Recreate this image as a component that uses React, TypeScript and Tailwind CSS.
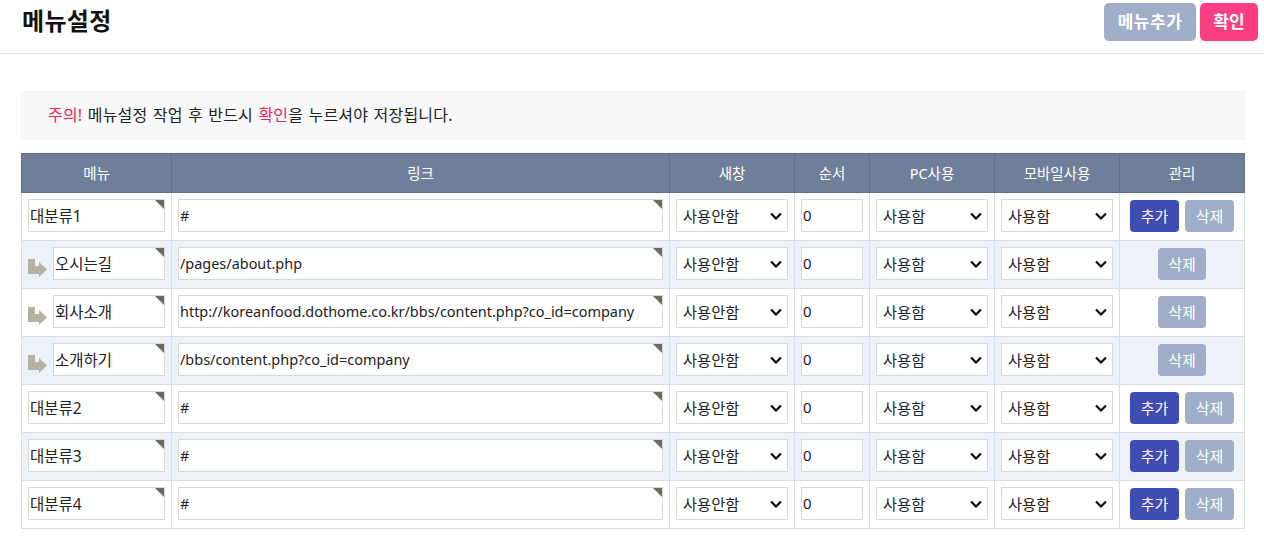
import React from 'react'

const font = { fontFamily: '"Noto Sans", "Noto Sans CJK KR", sans-serif' }

type Row = { name: string; link: string; sub?: boolean }

const rows: Row[] = [
  { name: '대분류1', link: '#' },
  { name: '오시는길', link: '/pages/about.php', sub: true },
  { name: '회사소개', link: 'http://koreanfood.dothome.co.kr/bbs/content.php?co_id=company', sub: true },
  { name: '소개하기', link: '/bbs/content.php?co_id=company', sub: true },
  { name: '대분류2', link: '#' },
  { name: '대분류3', link: '#' },
  { name: '대분류4', link: '#' },
]

const headers = ['메뉴', '링크', '새창', '순서', 'PC사용', '모바일사용', '관리']

function TextBox({ value, korean }: { value: string; korean?: boolean }) {
  return (
    <div className="relative min-w-0 flex-1">
      <input
        readOnly
        value={value}
        className={
          korean
            ? 'block h-[33px] w-full border border-[#d8d8d8] bg-white pl-[1px] text-[15.5px] text-[#222] outline-none'
            : 'block h-[33px] w-full border border-[#d8d8d8] bg-white pl-[1px] pb-[1px] text-[14.45px] text-[#222] outline-none'
        }
      />
      <span className="absolute right-[1px] top-[1px] h-0 w-0 border-l-[9px] border-t-[9px] border-l-transparent border-t-[#6b6b62]" />
    </div>
  )
}

function Choice({ value, options }: { value: string; options: string[] }) {
  return (
    <div className="relative">
      <select
        defaultValue={value}
        className="block h-[33px] w-full appearance-none border border-[#d8d8d8] bg-white pl-[6px] pt-[2px] text-[15.3px] text-[#222] outline-none"
      >
        {options.map((o) => (
          <option key={o}>{o}</option>
        ))}
      </select>
      <svg
        width="12"
        height="8"
        viewBox="0 0 12 8"
        fill="none"
        stroke="#111"
        strokeWidth="2.2"
        className="pointer-events-none absolute right-[6px] top-[13px]"
      >
        <path d="M1 1.5l5 5 5-5" />
      </svg>
    </div>
  )
}

function SubArrow() {
  return (
    <svg width="19" height="19" viewBox="0 0 19 19" className="mt-[12px] shrink-0" fill="#b5b1a3">
      <path d="M0 0h7v7h4V3l8 7.5L11 18v-3H0z" />
    </svg>
  )
}

export default function App() {
  return (
    <div className="min-h-[537px] bg-white" style={font}>
      <header className="flex h-[54px] items-start justify-between border-b border-[#e0e0e0] pl-[22px] pr-[6px]">
        <h1 className="mt-[3px] text-[24px] leading-[36px] font-bold tracking-[0.3px] text-[#111]">메뉴설정</h1>
        <div className="mt-[3px] flex gap-[4px]">
          <button className="h-[38px] w-[92px] rounded-[5px] bg-[#a0aec8] text-[17px] font-bold tracking-[0.5px] text-white">
            메뉴추가
          </button>
          <button className="h-[38px] w-[58px] rounded-[5px] bg-[#fb3d82] text-[17px] font-bold text-white">
            확인
          </button>
        </div>
      </header>

      <main className="pl-[21px] pr-[19px]">
        <p className="mt-[37px] mb-[13px] flex h-[49px] items-center border border-[#f3f3f3] bg-[#f8f8f8] pb-[2px] pl-[26px] text-[16px] tracking-[0.2px] text-[#222] [word-spacing:1px]">
          <span>
            <span className="text-[#e8265f]">주의!</span> 메뉴설정 작업 후 반드시{' '}
            <span className="text-[#e8265f]">확인</span>을 누르셔야 저장됩니다.
          </span>
        </p>

        <table className="w-[1223px] table-fixed border-collapse">
          <colgroup>
            <col className="w-[150px]" />
            <col className="w-[498px]" />
            <col className="w-[125px]" />
            <col className="w-[75px]" />
            <col className="w-[125px]" />
            <col className="w-[125px]" />
            <col className="w-[125px]" />
          </colgroup>
          <thead>
            <tr className="h-[39px] bg-[#6f7f99]">
              {headers.map((h) => (
                <th key={h} className="border border-[#5f6f8a] pt-[1px] text-[14.5px] font-normal text-white">
                  {h}
                </th>
              ))}
            </tr>
          </thead>
          <tbody>
            {rows.map((row, i) => (
              <tr key={row.name} className={i % 2 === 1 ? 'h-[48px] bg-[#edf1f9]' : 'h-[48px] bg-white'}>
                <td className="border border-[#d9dde6] px-[6px] pb-[2px]">
                  <div className="flex gap-[6px]">
                    {row.sub && <SubArrow />}
                    <TextBox value={row.name} korean />
                  </div>
                </td>
                <td className="border border-[#d9dde6] px-[6px] pb-[2px]">
                  <TextBox value={row.link} />
                </td>
                <td className="border border-[#d9dde6] px-[6px] pb-[2px]">
                  <Choice value="사용안함" options={['사용안함', '사용함']} />
                </td>
                <td className="border border-[#d9dde6] px-[6px] pb-[2px]">
                  <input
                    readOnly
                    value="0"
                    className="block h-[33px] w-full border border-[#d8d8d8] bg-white pl-[1px] pb-[1px] text-[15px] text-[#222] outline-none"
                  />
                </td>
                <td className="border border-[#d9dde6] px-[6px] pb-[2px]">
                  <Choice value="사용함" options={['사용함', '사용안함']} />
                </td>
                <td className="border border-[#d9dde6] px-[6px] pb-[2px]">
                  <Choice value="사용함" options={['사용함', '사용안함']} />
                </td>
                <td className="border border-[#d9dde6] pb-[1px]">
                  {row.sub ? (
                    <div className="flex justify-center">
                      <button className="h-[32px] w-[48px] rounded-[4px] bg-[#a0aec8] pt-[1px] text-[15px] text-white">
                        삭제
                      </button>
                    </div>
                  ) : (
                    <div className="flex justify-center gap-[6px]">
                      <button className="h-[32px] w-[49px] rounded-[4px] bg-[#3f4db3] pt-[1px] text-[15px] text-white">
                        추가
                      </button>
                      <button className="h-[32px] w-[49px] rounded-[4px] bg-[#a0aec8] pt-[1px] text-[15px] text-white">
                        삭제
                      </button>
                    </div>
                  )}
                </td>
              </tr>
            ))}
          </tbody>
        </table>
      </main>
    </div>
  )
}
